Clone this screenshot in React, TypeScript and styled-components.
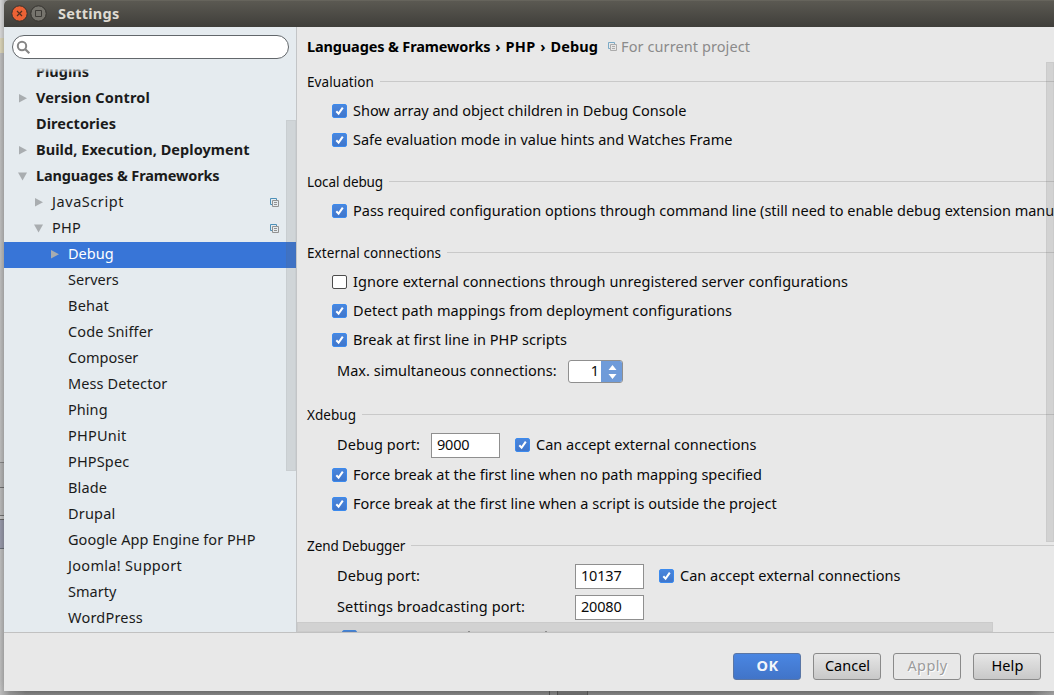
import React from 'react';
import styled, { createGlobalStyle, css } from 'styled-components';

const Global = createGlobalStyle`
  * { box-sizing: border-box; }
  body { margin: 0; font: 14.5px/20px "Noto Sans", "Open Sans", sans-serif; color: #0a0a0a; overflow: hidden; }
`;

const Desktop = styled.div`
  display: grid;
  grid-template-columns: 4px 1050px;
  grid-template-rows: 691px 4px;
  width: 1054px;
  height: 695px;
  overflow: hidden;
  background: #a9a9a9;
`;
const BehindLeft = styled.div`
  background:
    linear-gradient(90deg, rgba(0,0,0,0) 0, rgba(0,0,0,.14) 100%),
    linear-gradient(#d4d4d4 0 38px, #d6d0b4 38px 53px, #b9b9b9 53px 462px, #848484 462px 463px, #b0b0b0 463px 487px,
      #6d6d6d 487px 488px, #b5b5b5 488px 515px, #707070 515px 516px, #c0c0c0 516px 519px, #666 519px 520px, #9496a6 520px 548px,
      #666b74 548px 549px, #b9b9b9 549px 680px, #c0c0c0 691px);
`;
const BehindBottom = styled.div`
  grid-column: 1 / 3;
  background:
    linear-gradient(90deg, #bcbcbc 0, rgba(160,160,160,0.6) 10px, transparent 26px),
    linear-gradient(90deg, transparent 549px, #4c4c4c 549px 550px, transparent 550px 557px, #4c4c4c 557px 558px, #6a6a6a 558px 587px, #505050 587px 588px, transparent 588px),
    linear-gradient(90deg, transparent 1030px, rgba(190,190,190,.5) 1054px),
    linear-gradient(#6c6c6c, #828282);
`;
const Dialog = styled.div`
  display: flex;
  flex-direction: column;
  background: #e8e8e8;
  border-top-left-radius: 5px;
  overflow: hidden;
`;
const TitleBar = styled.header`
  height: 27px;
  flex: none;
  display: flex;
  align-items: center;
  padding: 0 0 0 7px;
  background: linear-gradient(#5b5952, #3f3e3a);
  border-top: 1px solid #66645c;
  color: #dfdbd2;
  font-weight: 700;
`;
const WindowIcon = styled.svg`
  width: 17px;
  height: 17px;
  margin: 0 2px 1px 0;
`;
const Title = styled.h1`
  margin: 0 0 0 9px;
  font-size: 14.5px;
  line-height: 20px;
  letter-spacing: 0.25px;
  padding-bottom: 3px;
`;
const Body = styled.div`
  height: 605px;
  flex: none;
  display: flex;
`;
const Sidebar = styled.aside`
  position: relative;
  width: 293px;
  flex: none;
  display: flex;
  flex-direction: column;
  background: #e5ebef;
  border-right: 1px solid #c3c5c7;
`;
const Search = styled.div`
  width: 277px;
  height: 24px;
  flex: none;
  margin: 8px 0 9px 8px;
  padding-left: 3px;
  border: 1px solid #62676b;
  border-radius: 12px;
  background: #fff;
  display: flex;
  align-items: center;
`;
const Tree = styled.ul`
  flex: 1;
  min-height: 0;
  margin: 0;
  padding: 0;
  list-style: none;
  overflow: hidden;
  display: flex;
  flex-direction: column;
`;
const TreeRow = styled.li<{ $depth: number; $selected?: boolean; $first?: boolean }>`
  height: 26px;
  flex: none;
  display: flex;
  align-items: center;
  padding: 0 17px 4px ${p => 12 + p.$depth * 16}px;
  color: ${p => (p.$selected ? '#fff' : '#1b1b1b')};
  background: ${p => (p.$selected ? '#3875d7' : 'none')};
  ${p => p.$first && css`margin-top: -8px;`}
`;
const TopFade = styled.div`
  position: absolute;
  left: 0;
  top: 41px;
  width: 280px;
  height: 4px;
  background: linear-gradient(#e5ebef, rgba(229, 235, 239, 0.3));
`;
const Twisty = styled.svg`
  width: 13px;
  height: 12px;
  flex: none;
  margin: 2px 7px 0 0;
`;
const Text = styled.span<{ $track?: number; $bold?: boolean }>`
  white-space: nowrap;
  letter-spacing: ${p => p.$track ?? 0}px;
  font-weight: ${p => (p.$bold ? 700 : 400)};
`;
const RowIcon = styled.span`
  display: flex;
  margin-left: auto;
  padding-top: 3px;
`;
const Thumb = styled.div<{ $area: 'tree' | 'right' | 'bottom' }>`
  position: absolute;
  background: rgba(100, 100, 100, 0.16);
  border: 1px solid rgba(100, 100, 100, 0.06);
  ${p => p.$area === 'tree' && css`right: 0; top: 93px; width: 10px; height: 351px;`}
  ${p => p.$area === 'right' && css`right: 0; top: 0; width: 8px; height: 480px;`}
  ${p => p.$area === 'bottom' && css`left: 0; bottom: 0; width: 696px; height: 10px;`}
`;
const Main = styled.main`
  flex: 1;
  min-width: 0;
  display: flex;
  flex-direction: column;
`;
const Crumbs = styled.div`
  height: 35px;
  flex: none;
  display: flex;
  align-items: center;
  padding: 2px 0 0 10px;
  color: #000;
`;
const Separator = styled.span`
  width: 15px;
  text-align: center;
  font-weight: 700;
`;
const Scope = styled.div`
  display: flex;
  align-items: center;
  gap: 4px;
  margin-left: 10px;
  color: #8b8b8b;
`;
const ScopeIcon = styled.span`
  display: flex;
  padding-top: 2px;
`;
const Scroll = styled.div`
  position: relative;
  flex: 1;
  min-height: 0;
  overflow: hidden;
  padding: 10px 0 0 9px;
`;
const Section = styled.section`
  margin-bottom: 17px;
`;
const SectionHead = styled.div`
  height: 20px;
  margin-bottom: 5px;
  padding-left: 1px;
  display: flex;
  align-items: center;
  gap: 6px;
  font-size: 13.5px;
`;
const Rule = styled.div`
  flex: 1;
  height: 1px;
  margin-bottom: 1px;
  background: #c9c9c9;
`;
const CheckRow = styled.div<{ $indent?: number }>`
  height: 29px;
  display: flex;
  padding: 0 0 1px ${p => p.$indent ?? 26}px;
`;
const CheckLabel = styled.label`
  display: flex;
  align-items: center;
  gap: 6px;
`;
const CheckText = styled(Text)`
  padding-bottom: 2px;
`;
const CheckBox = styled.span<{ $on: boolean }>`
  width: 15px;
  height: 14px;
  flex: none;
  display: flex;
  border-radius: 2px;
  border: 1px solid ${p => (p.$on ? '#3b8aee' : '#4c4c4c')};
  background: ${p => (p.$on ? 'linear-gradient(#4a86dc, #3f76cc)' : '#fff')};
`;
const FieldRow = styled.div<{ $tall?: boolean }>`
  height: ${p => (p.$tall ? 33 : 31)}px;
  display: flex;
  align-items: center;
  padding-left: 31px;
`;
const FieldLabel = styled.div<{ $width: number }>`
  width: ${p => p.$width}px;
  flex: none;
  padding-bottom: 3px;
`;
const FieldCheck = styled.div`
  padding-bottom: 2px;
`;
const Input = styled.div`
  width: 69px;
  height: 25px;
  margin-right: 15px;
  padding-left: 5px;
  border: 1px solid #8f8f8f;
  background: #fff;
`;
const Spinner = styled.div`
  width: 55px;
  height: 23px;
  display: flex;
  border: 1px solid #8f8f8f;
  border-radius: 3px;
  background: #fff;
  overflow: hidden;
`;
const SpinValue = styled.div`
  flex: 1;
  text-align: right;
  padding-right: 2px;
  line-height: 18px;
`;
const SpinArrows = styled.svg`
  width: 21px;
  height: 21px;
  background: #6f9bd9;
`;
const ClippedMark = styled.span`
  align-self: flex-end;
  width: 2px;
  height: 1px;
  margin: 0 0 19px 111px;
  background: #999;
  & + & { margin-left: 75px; }
`;
const Footer = styled.footer`
  flex: 1;
  display: flex;
  justify-content: flex-end;
  gap: 12px;
  padding: 20px 13px 0 0;
  border-top: 1px solid #c1c1c1;
`;
const Button = styled.button<{ $kind?: 'primary' | 'disabled' }>`
  width: 68px;
  height: 27px;
  padding: 0 0 4px 1px;
  border: 1px solid #8a8a8a;
  border-radius: 3px;
  font: inherit;
  color: #000;
  background: linear-gradient(#e6e6e6, #c8c8c8);
  ${p => p.$kind === 'primary' && css`
    color: #f2f5fa;
    border-color: #5a76a5;
    background: linear-gradient(#4a86e2, #4174c8);
  `}
  ${p => p.$kind === 'disabled' && css`
    color: #9c9c9c;
    background: #e8e8e8;
    text-shadow: 1px 1px 0 #fff;
  `}
`;

const CopyIcon = ({ faded }: { faded?: boolean }) => (
  <svg width="9" height="9" viewBox="0 0 9 9" fill="none" opacity={faded ? 0.7 : 1}>
    <path d="M2 6.5H.5V.5h6V2" stroke="#4d90b8" />
    <path d="M2.5 2.5h6v6h-6zM4 4.5h3M4 6.5h3" stroke="#929292" />
  </svg>
);

const Check = ({ on = true, track = 0, children }: { on?: boolean; track?: number; children?: React.ReactNode }) => (
  <CheckLabel>
    <CheckBox $on={on}>
      {on && (
        <svg width="13" height="12" viewBox="0 0 13 12" fill="none">
          <path d="M3.3 6.2 5.6 8.6 9.8 2.6" stroke="#fff" strokeWidth="2" />
        </svg>
      )}
    </CheckBox>
    {children && <CheckText $track={track}>{children}</CheckText>}
  </CheckLabel>
);

const Head = ({ track, children }: { track: number; children: string }) => (
  <SectionHead><Text $track={track}>{children}</Text><Rule /></SectionHead>
);

type Node = { name: string; depth: number; track: number; bold?: boolean; arrow?: 'open' | 'closed'; copy?: boolean; selected?: boolean };
const nodes: Node[] = [
  { name: 'Plugins', depth: 0, track: 0.01, bold: true },
  { name: 'Version Control', depth: 0, track: 0.14, bold: true, arrow: 'closed' },
  { name: 'Directories', depth: 0, track: 0.06, bold: true },
  { name: 'Build, Execution, Deployment', depth: 0, track: 0.06, bold: true, arrow: 'closed' },
  { name: 'Languages & Frameworks', depth: 0, track: -0.14, bold: true, arrow: 'open' },
  { name: 'JavaScript', depth: 1, track: 0.56, arrow: 'closed', copy: true },
  { name: 'PHP', depth: 1, track: 0.24, arrow: 'open', copy: true },
  { name: 'Debug', depth: 2, track: 0, arrow: 'closed', selected: true },
  { name: 'Servers', depth: 2, track: 0 },
  { name: 'Behat', depth: 2, track: 0.21 },
  { name: 'Code Sniffer', depth: 2, track: 0.12 },
  { name: 'Composer', depth: 2, track: 0 },
  { name: 'Mess Detector', depth: 2, track: 0.1 },
  { name: 'Phing', depth: 2, track: 0.05 },
  { name: 'PHPUnit', depth: 2, track: 0.22 },
  { name: 'PHPSpec', depth: 2, track: 0.15 },
  { name: 'Blade', depth: 2, track: 0.15 },
  { name: 'Drupal', depth: 2, track: 0.18 },
  { name: 'Google App Engine for PHP', depth: 2, track: 0.06 },
  { name: 'Joomla! Support', depth: 2, track: 0.31 },
  { name: 'Smarty', depth: 2, track: 0 },
  { name: 'WordPress', depth: 2, track: 0.21 },
];

export default function App() {
  return (
    <>
      <Global />
      <Desktop>
        <BehindLeft />
        <Dialog>
          <TitleBar>
            <WindowIcon viewBox="0 0 17 17">
              <circle cx="8.5" cy="8.5" r="7.7" fill="#ec6235" stroke="#35332f" />
              <path d="M6 6l5 5M11 6l-5 5" stroke="#53301f" strokeWidth="1.2" />
            </WindowIcon>
            <WindowIcon viewBox="0 0 17 17">
              <circle cx="8.5" cy="8.5" r="7.7" fill="#76746d" stroke="#35332f" />
              <path d="M5.5 5.5h6v6h-6z" fill="none" stroke="#3d3b37" />
            </WindowIcon>
            <Title>Settings</Title>
          </TitleBar>
          <Body>
            <Sidebar>
              <Search>
                <svg width="15" height="15" viewBox="0 0 15 15" fill="none" stroke="#868686" strokeWidth="2">
                  <circle cx="6" cy="6" r="4.2" />
                  <path d="M9 9l4.3 4.3" strokeWidth="2.2" />
                </svg>
              </Search>
              <Tree>
                {nodes.map((n, i) => (
                  <TreeRow key={n.name} $depth={n.depth} $selected={n.selected} $first={i === 0}>
                    <Twisty viewBox="0 0 13 12">
                      {n.arrow === 'closed' && <path d="M3 2v8.5l8-4.25z" fill="#a9adb0" />}
                      {n.arrow === 'open' && <path d="M2 2.5h9L6.5 10.5z" fill="#a9adb0" />}
                    </Twisty>
                    <Text $track={n.track} $bold={n.bold}>{n.name}</Text>
                    {n.copy && <RowIcon><CopyIcon /></RowIcon>}
                  </TreeRow>
                ))}
              </Tree>
              <TopFade />
              <Thumb $area="tree" />
            </Sidebar>
            <Main>
              <Crumbs>
                <Text $bold $track={-0.14}>Languages &amp; Frameworks</Text>
                <Separator>›</Separator>
                <Text $bold $track={0.3}>PHP</Text>
                <Separator>›</Separator>
                <Text $bold $track={0.1}>Debug</Text>
                <Scope><ScopeIcon><CopyIcon faded /></ScopeIcon><Text $track={0.09}>For current project</Text></Scope>
              </Crumbs>
              <Scroll>
                <Section>
                  <Head track={0.08}>Evaluation</Head>
                  <CheckRow><Check track={-0.02}>Show array and object children in Debug Console</Check></CheckRow>
                  <CheckRow><Check track={0}>Safe evaluation mode in value hints and Watches Frame</Check></CheckRow>
                </Section>
                <Section>
                  <Head track={-0.1}>Local debug</Head>
                  <CheckRow><Check track={-0.01}>Pass required configuration options through command line (still need to enable debug extension manually)</Check></CheckRow>
                </Section>
                <Section>
                  <Head track={0.09}>External connections</Head>
                  <CheckRow><Check on={false} track={0.06}>Ignore external connections through unregistered server configurations</Check></CheckRow>
                  <CheckRow><Check track={0.06}>Detect path mappings from deployment configurations</Check></CheckRow>
                  <CheckRow><Check track={0.05}>Break at first line in PHP scripts</Check></CheckRow>
                  <FieldRow $tall>
                    <FieldLabel $width={231}><Text $track={0.03}>Max. simultaneous connections:</Text></FieldLabel>
                    <Spinner>
                      <SpinValue>1</SpinValue>
                      <SpinArrows viewBox="0 0 21 21">
                        <path d="M7.5 9l4-5 4 5zM7.5 13l4 5 4-5z" fill="#fff" />
                      </SpinArrows>
                    </Spinner>
                  </FieldRow>
                </Section>
                <Section>
                  <Head track={0.04}>Xdebug</Head>
                  <FieldRow>
                    <FieldLabel $width={94}><Text $track={0.08}>Debug port:</Text></FieldLabel>
                    <Input><Text $track={-0.2}>9000</Text></Input>
                    <FieldCheck><Check track={0.01}>Can accept external connections</Check></FieldCheck>
                  </FieldRow>
                  <CheckRow><Check>Force break at the first line when no path mapping specified</Check></CheckRow>
                  <CheckRow><Check track={0.01}>Force break at the first line when a script is outside the project</Check></CheckRow>
                </Section>
                <Section>
                  <Head track={-0.08}>Zend Debugger</Head>
                  <FieldRow>
                    <FieldLabel $width={238}><Text $track={0.08}>Debug port:</Text></FieldLabel>
                    <Input><Text $track={-0.2}>10137</Text></Input>
                    <FieldCheck><Check track={0.01}>Can accept external connections</Check></FieldCheck>
                  </FieldRow>
                  <FieldRow>
                    <FieldLabel $width={238}><Text $track={0.12}>Settings broadcasting port:</Text></FieldLabel>
                    <Input><Text $track={-0.2}>20080</Text></Input>
                  </FieldRow>
                  <CheckRow $indent={36}><Check /><ClippedMark /><ClippedMark /></CheckRow>
                </Section>
                <Thumb $area="right" />
                <Thumb $area="bottom" />
              </Scroll>
            </Main>
          </Body>
          <Footer>
            <Button $kind="primary"><Text $bold $track={0.4}>OK</Text></Button>
            <Button><Text>Cancel</Text></Button>
            <Button $kind="disabled"><Text $track={0.35}>Apply</Text></Button>
            <Button><Text $track={0.1}>Help</Text></Button>
          </Footer>
        </Dialog>
        <BehindBottom />
      </Desktop>
    </>
  );
}
